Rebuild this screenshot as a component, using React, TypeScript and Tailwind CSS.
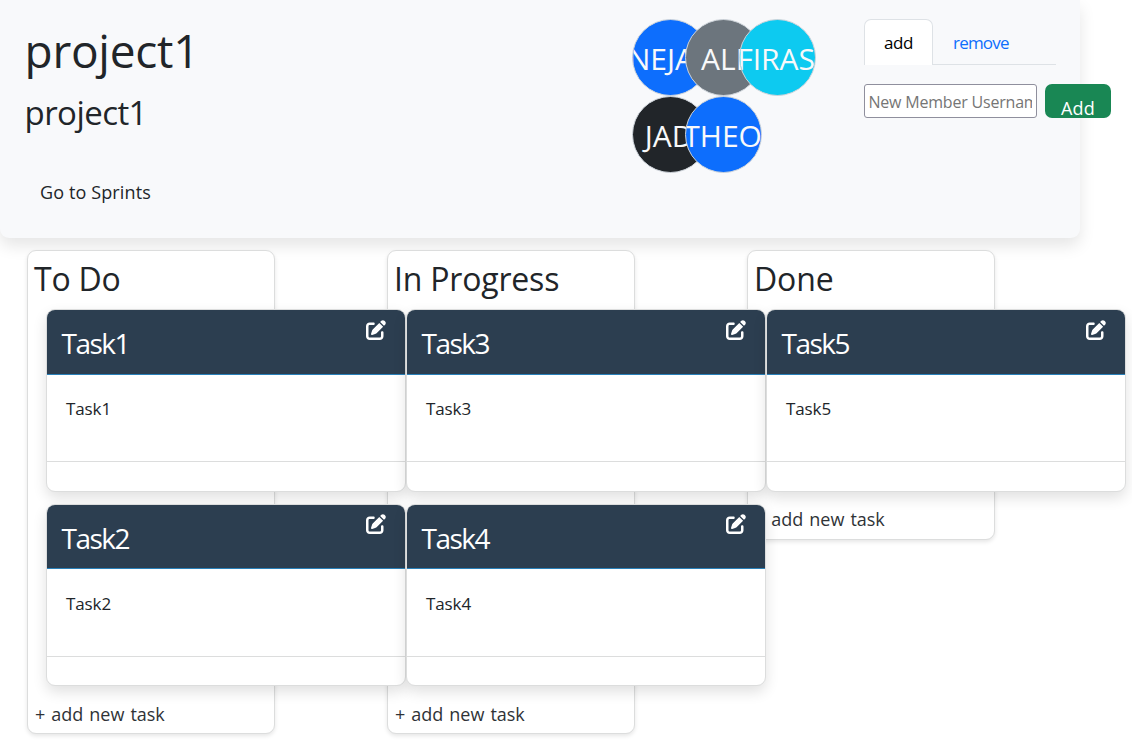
import { FaPenToSquare } from "react-icons/fa6";

const columns = [
  { title: "To Do", titleClass: "tracking-[-0.2px]", tasks: ["Task1", "Task2"] },
  { title: "In Progress", titleClass: "tracking-[-0.2px]", tasks: ["Task3", "Task4"] },
  { title: "Done", titleClass: "tracking-[-0.1px]", tasks: ["Task5"] },
];

const members = [
  { name: "NEJAT", color: "bg-[#0d6efd]" },
  { name: "ALI", color: "bg-[#6c757d]" },
  { name: "FIRAS", color: "bg-[#0dcaf0]" },
  { name: "JAD", color: "bg-[#212529]" },
  { name: "THEO", color: "bg-[#0d6efd]" },
];

function Avatar({ name, color }: { name: string; color: string }) {
  return (
    <div
      className={`mr-[-23.5px] flex h-[77px] w-[77px] shrink-0 items-center justify-center overflow-hidden rounded-full border border-[#ced4da] pt-[1px] text-[30px] tracking-[0px] whitespace-nowrap text-[#f8f9fa] ${color}`}
    >
      <span className="mr-[2px] shrink-0">{name}</span>
    </div>
  );
}

function TaskCard({ name }: { name: string }) {
  return (
    <article className="relative z-10 flex h-[182.6px] w-[360px] shrink-0 flex-col overflow-hidden rounded-[9px] border border-[#dcdddd] bg-white shadow-[0_6px_14px_rgba(0,0,0,0.12)]">
      <div className="flex h-[64.6px] shrink-0 items-start justify-between border-b border-[#2980b9] bg-[#2c3e50] pr-[19px] pl-[14.5px] text-white">
        <h3 className="pt-[15px] text-[28px] leading-[36px] tracking-[-1.5px]">{name}</h3>
        <FaPenToSquare className="mt-[9.6px] h-5 w-5" />
      </div>
      <p className="grow pt-[20.4px] pl-[19px] text-[17px] leading-[28px] tracking-[-0.1px]">{name}</p>
      <div className="h-[29.6px] shrink-0 border-t border-[#dcdddd]" />
    </article>
  );
}

export default function App() {
  return (
    <div className="h-[744px] w-[1132px] overflow-hidden bg-white font-['Open_Sans','Noto_Sans',sans-serif] text-[#212529]">
      <header className="flex h-[238px] w-[1080px] rounded-b-[9px] bg-[#f8f9fb] shadow-[0_8px_16px_rgba(0,0,0,0.1)]">
        <div className="w-[631.6px] shrink-0 pl-[24.5px]">
          <h1 className="pt-[20px] text-[46px] leading-[60px] tracking-[-0.25px]">project1</h1>
          <h2 className="pt-[11px] text-[33px] leading-[44px] tracking-[-0.55px]">project1</h2>
          <button className="mt-[43px] block pl-[15.5px] text-[18px] leading-[28px] tracking-[0.12px]">Go to Sprints</button>
        </div>
        <div className="flex w-[232.4px] shrink-0 flex-wrap content-start pt-[19px] pr-[40px]">
          {members.map((m) => (
            <Avatar key={m.name} name={m.name} color={m.color} />
          ))}
        </div>
        <div className="w-[192px] shrink-0 pt-[19px]">
          <nav className="flex h-[46px] border-b border-[#dee2e6] text-[17px] leading-[28px]">
            <button className="mb-[-1px] h-[46px] w-[69px] rounded-t-[7px] border border-b-0 border-[#dee2e6] bg-white pt-[1px] tracking-[-0.5px] text-black">add</button>
            <button className="pt-[2px] pl-[20px] tracking-[-0.8px] text-[#0d6efd]">remove</button>
          </nav>
          <form className="mt-[19px] flex w-[247px] gap-2">
            <input
              placeholder="New Member Username"
              className="h-[34px] w-[173px] rounded-[3px] border border-[#8f8f9d] bg-white px-[3.5px] pt-[2px] text-[16px] tracking-[-0.2px] placeholder:text-[#757575]"
            />
            <button type="button" className="h-[34px] w-[66px] overflow-hidden rounded-[7px] bg-[#198754] pt-[10px] text-[18px] leading-[28px] tracking-[0.2px] text-white">Add</button>
          </form>
        </div>
      </header>
      <main className="flex items-start gap-[112px] pt-[12px] pl-[27px]">
        {columns.map((c) => (
          <section
            key={c.title}
            className="w-[248px] shrink-0 rounded-[9px] border border-[#dcdddd] bg-white pb-[5.4px] shadow-[0_2px_4px_rgba(0,0,0,0.1)]"
          >
            <h2 className={`h-[58px] pt-[7px] pl-[6px] text-[32px] leading-[42px] ${c.titleClass}`}>{c.title}</h2>
            <div className="flex flex-col gap-[12px] pl-[18px]">
              {c.tasks.map((t) => (
                <TaskCard key={t} name={t} />
              ))}
            </div>
            <button className="mt-[13.6px] block pl-[7px] text-[18px] leading-[28px] tracking-[-0.05px] text-[#2f3337] [word-spacing:1.5px]">+ add new task</button>
          </section>
        ))}
      </main>
    </div>
  );
}
